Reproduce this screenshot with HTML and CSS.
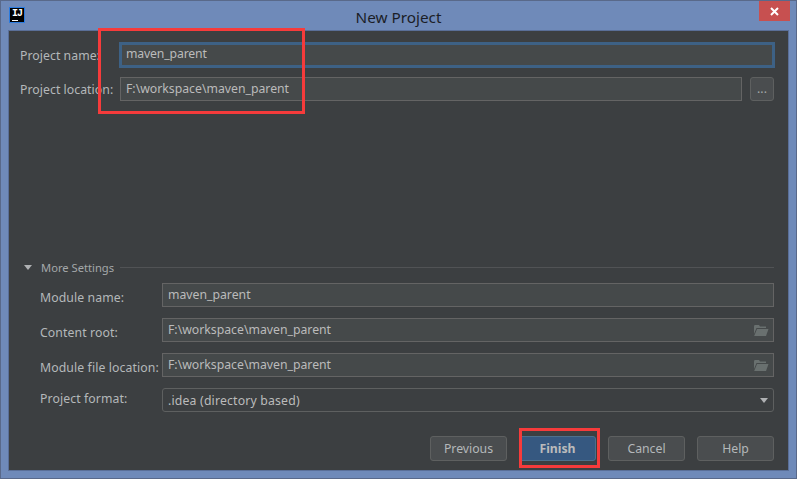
FILE: index.html
```html
<!DOCTYPE html>
<html>
<head>
<meta charset="utf-8">
<title>New Project</title>
<link rel="stylesheet" href="styles.css">
</head>
<body>
<div class="window">
  <div class="titlebar">
    <div class="app-icon"><span class="app-letters">IJ</span><span class="app-bar"></span></div>
    <div class="title">New Project</div>
    <div class="close"><svg width="9" height="9" viewBox="0 0 9 9"><path d="M1 1L8 8M8 1L1 8" stroke="#fff" stroke-width="2" fill="none"/></svg></div>
  </div>
  <div class="content">
    <div class="top-form">
      <div class="row row-name">
        <label class="label label-top">Project name:</label>
        <div class="field field-focus">maven_parent</div>
      </div>
      <div class="row row-location">
        <label class="label label-top">Project location:</label>
        <div class="field">F:\workspace\maven_parent</div>
        <div class="dots">...</div>
      </div>
    </div>
    <div class="more">
      <div class="more-head">
        <span class="tri"></span>
        <span class="more-title">More Settings</span>
        <span class="more-line"></span>
      </div>
      <div class="row-sub">
        <label class="label label-sub">Module name:</label>
        <div class="field">maven_parent</div>
      </div>
      <div class="row-sub">
        <label class="label label-sub">Content root:</label>
        <div class="field field-icon">F:\workspace\maven_parent
          <svg class="folder" width="16" height="13" viewBox="0 0 16 13"><path d="M1 2.5L1.5 1H6L7 2.5H13V4H3.5L1 10Z" fill="#69706f"/><path d="M4 5H15.5L13 12H1.2Z" fill="#69706f"/></svg>
        </div>
      </div>
      <div class="row-sub">
        <label class="label label-sub">Module file location:</label>
        <div class="field field-icon">F:\workspace\maven_parent
          <svg class="folder" width="16" height="13" viewBox="0 0 16 13"><path d="M1 2.5L1.5 1H6L7 2.5H13V4H3.5L1 10Z" fill="#69706f"/><path d="M4 5H15.5L13 12H1.2Z" fill="#69706f"/></svg>
        </div>
      </div>
      <div class="row-sub">
        <label class="label label-sub label-format">Project format:</label>
        <div class="field field-select">.idea (directory based)<span class="select-arrow"></span></div>
      </div>
    </div>
    <div class="buttons">
      <div class="btn">Previous</div>
      <div class="btn btn-primary">Finish</div>
      <div class="btn">Cancel</div>
      <div class="btn">Help</div>
    </div>
  </div>
  <div class="mark mark-fields"></div>
  <div class="mark mark-finish"></div>
</div>
</body>
</html>
```
FILE: styles.css
```css
* { box-sizing: border-box; }
html, body { margin: 0; padding: 0; }
body { width: 797px; height: 479px; overflow: hidden; font-family: "Noto Sans", sans-serif; font-size: 12.25px; color: #b4b8ba; }
.window { position: relative; width: 797px; height: 479px; background: #6f8ab9; border: 1px solid #59698a; padding: 0 7px 7px 7px; display: flex; flex-direction: column; }
.titlebar { position: relative; height: 29px; flex: none; display: flex; align-items: center; justify-content: center; }
.app-icon { position: absolute; left: 1px; top: 6px; width: 16px; height: 16px; background: #000; border: 1px solid #2a7be0; display: flex; flex-direction: column; align-items: center; color: #fff; }
.app-letters { font: bold 10px/10px "Liberation Mono", monospace; letter-spacing: -1px; margin-top: 1px; }
.app-bar { width: 6px; height: 1px; background: #fff; margin-top: 1px; align-self: flex-start; margin-left: 2px; }
.title { font-size: 15.3px; color: #1b1e27; margin-top: 2px; }
.close { position: absolute; right: -1px; top: 0; width: 31px; height: 20px; background: #c75050; display: flex; align-items: center; justify-content: center; }
.content { flex: 1; background: #3c3f41; border: 1px solid #5a6f98; display: flex; flex-direction: column; padding: 0 14px 0 11px; }
.top-form { display: flex; flex-direction: column; }
.row { display: flex; align-items: center; height: 24px; }
.row-name { margin-top: 12px; }
.row-location { margin-top: 10px; }
.label { flex: none; color: #b4b8ba; }
.label-top { width: 100px; letter-spacing: 0.05px; }
.field { flex: 1; height: 24px; background: #45494a; border: 1px solid #646464; color: #bbbbbb; padding: 0 5px; line-height: 21px; position: relative; }
.field-focus { border: 2px solid #3d6185; box-shadow: 0 0 0 1px #3d6185 inset; padding-left: 5px; margin-left: -1px; margin-right: -1px; line-height: 20px; height: 26px; letter-spacing: -0.15px; }
.dots { flex: none; width: 24px; height: 24px; margin-left: 8px; background: #4a4d4f; border: 1px solid #5e6060; border-radius: 3px; text-align: center; line-height: 22px; color: #a4a8aa; }
.more { margin-top: 158px; display: flex; flex-direction: column; }
.more-head { display: flex; align-items: center; height: 16px; }
.tri { width: 0; height: 0; border-left: 4px solid transparent; border-right: 4px solid transparent; border-top: 5px solid #afb1b3; margin-left: 4px; }
.more-title { margin-left: 9px; font-size: 11.2px; color: #a4a8aa; }
.more-line { flex: 1; height: 1px; background: #515355; margin-left: 6px; }
.row-sub { display: flex; align-items: center; height: 24px; padding-left: 20px; margin-top: 11px; }
.more-head + .row-sub { margin-top: 8px; }
.label-sub { width: 122px; margin-top: 4px; letter-spacing: 0.1px; }
.label-sub.label-format { margin-top: -3px; }
.field-icon { padding-right: 24px; }
.folder { position: absolute; right: 4px; top: 5px; }
.field-select { background: #3c3f41; border-radius: 3px; border-color: #5e6060; line-height: 23px; letter-spacing: 0.18px; }
.select-arrow { position: absolute; right: 5px; top: 9px; width: 0; height: 0; border-left: 4.5px solid transparent; border-right: 4.5px solid transparent; border-top: 5px solid #afb1b3; }
.buttons { display: flex; justify-content: flex-end; gap: 12px; margin-top: 24px; }
.btn { width: 77px; height: 25px; background: #4a4d4f; border: 1px solid #5e6060; border-radius: 3px; text-align: center; line-height: 24px; color: #b4b8ba; }
.btn-primary { background: #365880; border-color: #4c708c; font-weight: bold; color: #bbbbbb; }
.mark { position: absolute; border: 3px solid #f63b3b; }
.mark-fields { left: 97px; top: 27px; width: 207px; height: 86px; }
.mark-finish { left: 518px; top: 427px; width: 81px; height: 40px; }
```
